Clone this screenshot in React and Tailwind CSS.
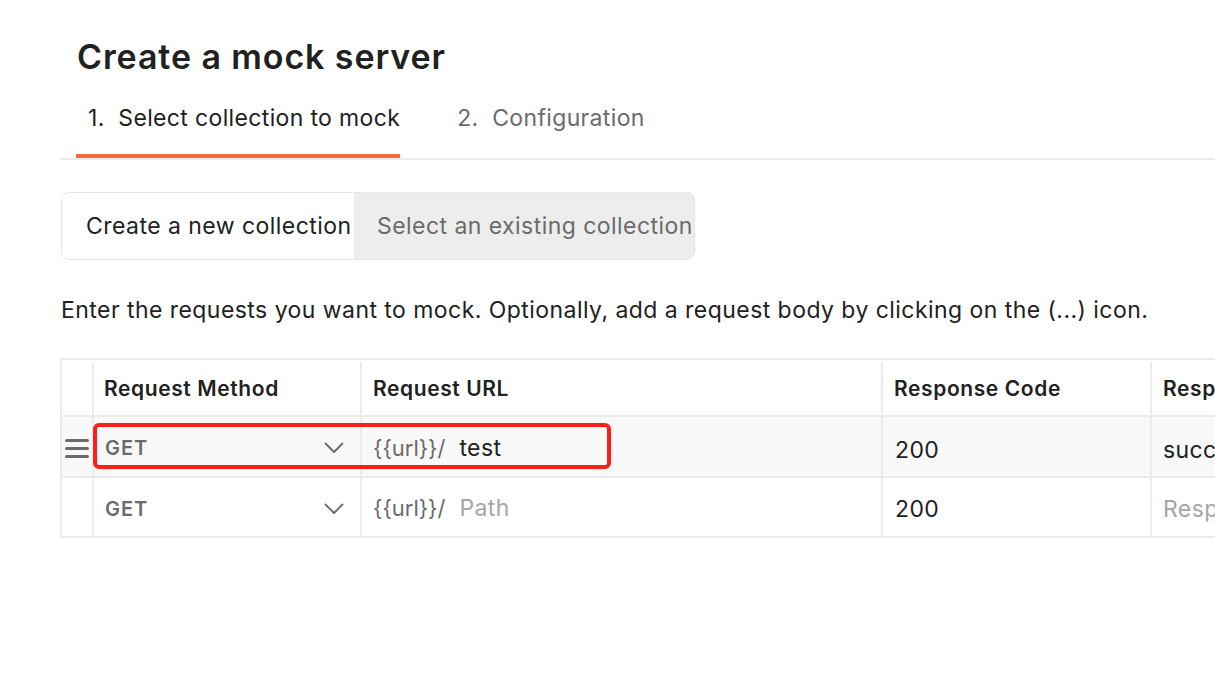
const ChevronDown = () => (
  <svg width="20" height="12" viewBox="0 0 20 12" fill="none">
    <path d="M1.5 1.5 L10 10 L18.5 1.5" stroke="#6b6b6b" strokeWidth="1.8" strokeLinecap="round" strokeLinejoin="round" />
  </svg>
);

const DragHandle = () => (
  <div className="flex flex-col gap-[5px]">
    <div className="w-6 h-[3px] rounded-full bg-[#6b6b6b]"></div>
    <div className="w-6 h-[3px] rounded-full bg-[#6b6b6b]"></div>
    <div className="w-6 h-[3px] rounded-full bg-[#6b6b6b]"></div>
  </div>
);

const MethodCell = () => (
  <div className="w-[268px] border-l-2 border-[#ebebeb] flex items-center justify-between pl-[11px] pr-[16px] pt-[3px]">
    <span className="text-[20px] tracking-[0.9px] font-semibold text-[#6b6b6b]">GET</span>
    <ChevronDown />
  </div>
);

const App = () => {
  return (
    <div className="w-[1215px] h-[697px] overflow-hidden bg-white pl-[60px] font-['Inter','Noto_Sans',sans-serif] text-[#212121]">
      {/* Title */}
      <h1 className="pl-[17px] pt-[37px] text-[34px] leading-[40px] tracking-[0.9px] font-semibold">
        Create a mock server
      </h1>

      {/* Steps */}
      <div className="mt-[11px] flex border-b-2 border-[#ebebeb]">
        <div className="ml-[16px] pl-3 pt-[15px] pb-[21px] border-b-4 border-[#f26b3a] text-[23px] leading-[30px] tracking-[0.35px] text-[#212121]">
          1.&nbsp; Select collection to mock
        </div>
        <div className="ml-[45px] px-3 pt-[15px] pb-[21px] border-b-4 border-transparent text-[23px] leading-[30px] tracking-[0.35px] text-[#6b6b6b]">
          2.&nbsp; Configuration
        </div>
      </div>

      {/* Collection toggle */}
      <div className="mt-[32px] ml-px flex w-[634px] h-[68px] rounded-lg border border-[#e6e6e6] bg-[#ededed] overflow-hidden">
        <div className="w-[292px] bg-white flex items-center pl-[24px] text-[23px] tracking-[0.45px] text-[#212121] whitespace-nowrap">
          Create a new collection
        </div>
        <div className="flex-1 flex items-center pl-[23px] text-[23px] tracking-[0.45px] text-[#6b6b6b] whitespace-nowrap">
          Select an existing collection
        </div>
      </div>

      <p className="mt-[35px] ml-px text-[23px] leading-[30px] tracking-[0.45px] text-[#212121] whitespace-nowrap">
        Enter the requests you want to mock. Optionally, add a request body by clicking on the (...) icon.
      </p>

      {/* Requests table */}
      <div className="relative mt-[33px] w-[1400px] border-2 border-[#ebebeb]">
        {/* Header */}
        <div className="flex h-[55px] pt-[2px] text-[21px] tracking-[0.6px] font-semibold text-[#212121]">
          <div className="w-[30px]"></div>
          <div className="w-[268px] border-l-2 border-[#ebebeb] flex items-center pl-[10px]">Request Method</div>
          <div className="w-[521px] border-l-2 border-[#ebebeb] flex items-center pl-[11px]">Request URL</div>
          <div className="w-[269px] border-l-2 border-[#ebebeb] flex items-center pl-[11px]">Response Code</div>
          <div className="flex-1 border-l-2 border-[#ebebeb] flex items-center pl-[11px]">Response Body</div>
        </div>

        {/* Row 1 */}
        <div className="flex h-[61px] border-t-2 border-[#ebebeb] bg-[#f9f9f9] text-[23px] tracking-[0.4px]">
          <div className="w-[30px] flex items-center justify-center pt-[3px]">
            <DragHandle />
          </div>
          <MethodCell />
          <div className="w-[521px] border-l-2 border-[#ebebeb] flex items-center pl-[11px] pt-[3px]">
            <span className="text-[22px] tracking-normal text-[#6b6b6b]">{"{{url}}/"}</span>
            <span className="ml-[14px] text-[#212121]">test</span>
          </div>
          <div className="w-[269px] border-l-2 border-[#ebebeb] flex items-center pl-[12px] pt-[7px]">200</div>
          <div className="flex-1 border-l-2 border-[#ebebeb] flex items-center pl-[11px] pt-[7px] whitespace-nowrap">success</div>
        </div>

        {/* Row 2 */}
        <div className="flex h-[60px] border-t-2 border-[#ebebeb] bg-white text-[23px] tracking-[0.4px]">
          <div className="w-[30px]"></div>
          <MethodCell />
          <div className="w-[521px] border-l-2 border-[#ebebeb] flex items-center pl-[11px] pt-[3px]">
            <span className="text-[22px] tracking-normal text-[#6b6b6b]">{"{{url}}/"}</span>
            <span className="ml-[14px] text-[#a6a6a6]">Path</span>
          </div>
          <div className="w-[269px] border-l-2 border-[#ebebeb] flex items-center pl-[12px] pt-[5px]">200</div>
          <div className="flex-1 border-l-2 border-[#ebebeb] flex items-center pl-[11px] pt-[5px] text-[#a6a6a6] whitespace-nowrap">Response Body</div>
        </div>

        {/* Highlight annotation */}
        <div className="absolute left-[31px] top-[63px] w-[518px] h-[46px] rounded-md border-4 border-[#ff1f1a] pointer-events-none"></div>
      </div>
    </div>
  );
};

export default App;
